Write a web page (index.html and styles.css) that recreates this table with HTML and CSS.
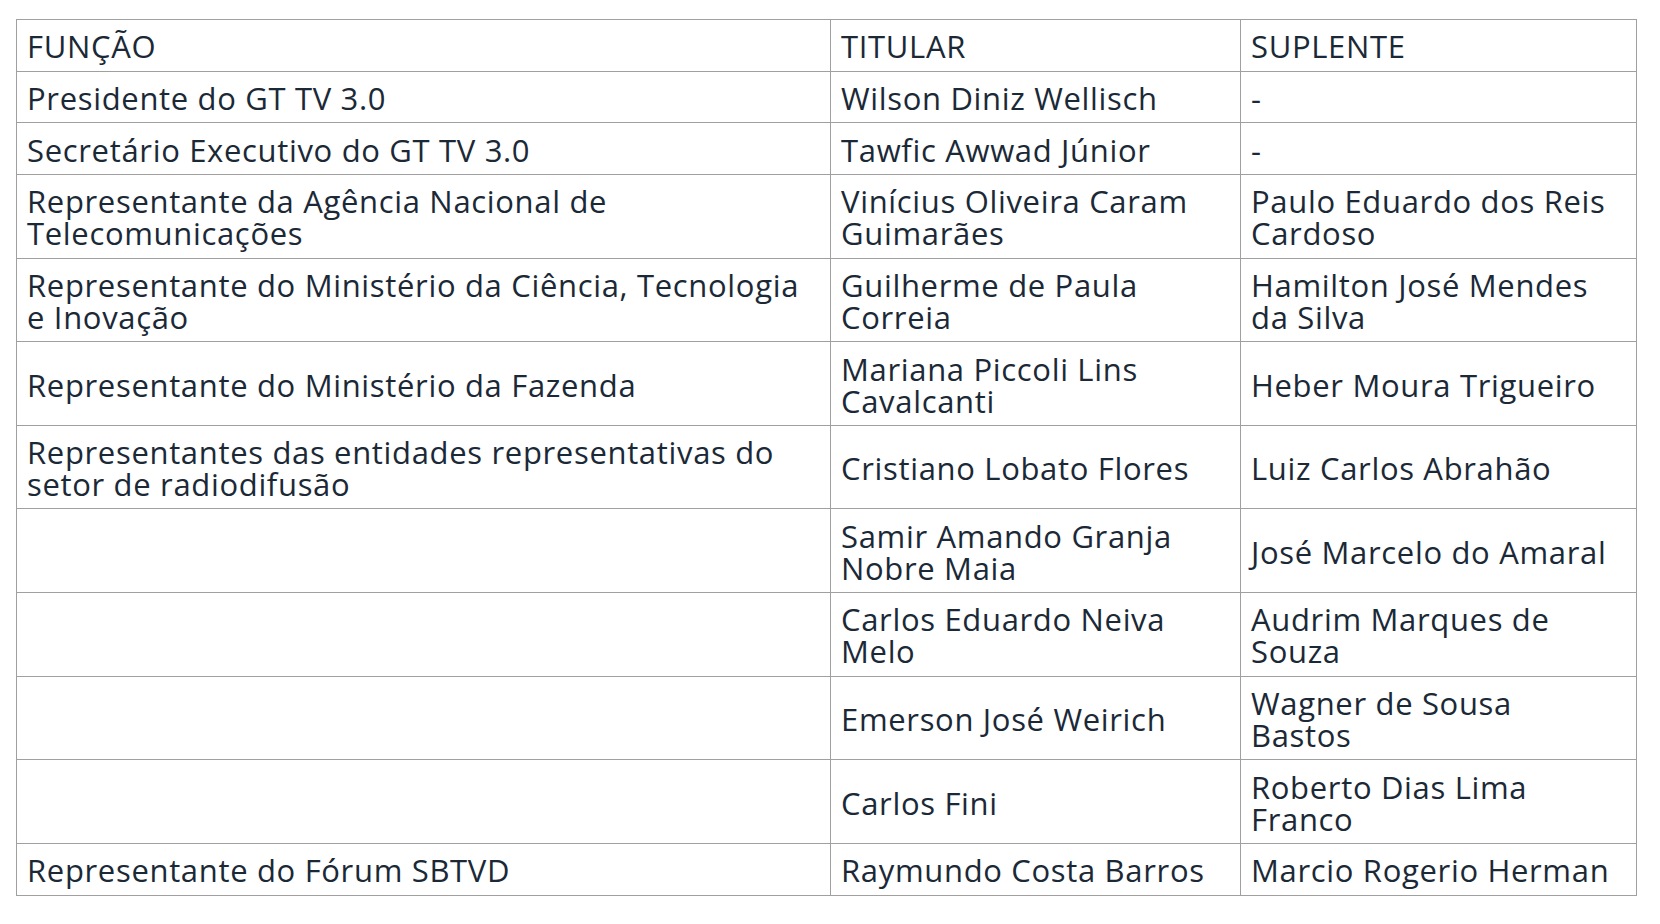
FILE: index.html
```html
<!DOCTYPE html>
<html lang="pt-BR">
<head>
<meta charset="utf-8">
<title>GT TV 3.0</title>
<link rel="stylesheet" href="styles.css">
</head>
<body>
<div class="wrap">
<table class="members">
  <colgroup>
    <col class="c-func">
    <col class="c-tit">
    <col class="c-sup">
  </colgroup>
  <tbody>
    <tr><td>FUNÇÃO</td><td>TITULAR</td><td>SUPLENTE</td></tr>
    <tr><td>Presidente do GT TV 3.0</td><td>Wilson Diniz Wellisch</td><td>-</td></tr>
    <tr><td>Secretário Executivo do GT TV 3.0</td><td>Tawfic Awwad Júnior</td><td>-</td></tr>
    <tr><td>Representante da Agência Nacional de<br>Telecomunicações</td><td>Vinícius Oliveira Caram<br>Guimarães</td><td>Paulo Eduardo dos Reis<br>Cardoso</td></tr>
    <tr><td>Representante do Ministério da Ciência, Tecnologia<br>e Inovação</td><td>Guilherme de Paula<br>Correia</td><td>Hamilton José Mendes<br>da Silva</td></tr>
    <tr><td>Representante do Ministério da Fazenda</td><td>Mariana Piccoli Lins<br>Cavalcanti</td><td>Heber Moura Trigueiro</td></tr>
    <tr><td>Representantes das entidades representativas do<br>setor de radiodifusão</td><td>Cristiano Lobato Flores</td><td>Luiz Carlos Abrahão</td></tr>
    <tr><td></td><td>Samir Amando Granja<br>Nobre Maia</td><td>José Marcelo do Amaral</td></tr>
    <tr><td></td><td>Carlos Eduardo Neiva<br>Melo</td><td>Audrim Marques de<br>Souza</td></tr>
    <tr><td></td><td>Emerson José Weirich</td><td>Wagner de Sousa<br>Bastos</td></tr>
    <tr><td></td><td>Carlos Fini</td><td>Roberto Dias Lima<br>Franco</td></tr>
    <tr><td>Representante do Fórum SBTVD</td><td>Raymundo Costa Barros</td><td>Marcio Rogerio Herman</td></tr>
  </tbody>
</table>
</div>
</body>
</html>
```
FILE: styles.css
```css
html, body {
  margin: 0;
  padding: 0;
  background: #ffffff;
}
.wrap {
  padding: 19px 0 0 16px;
}
.members {
  border-collapse: collapse;
  table-layout: fixed;
  width: 1620px;
  font-family: "Open Sans", Lato, sans-serif;
  font-size: 31px;
  font-weight: 400;
  line-height: 31.9px;
  letter-spacing: 0.67px;
  color: #1b2937;
}
.c-func { width: 814px; }
.c-tit { width: 410px; }
.c-sup { width: 396px; }
.members td {
  border: 1px solid #a0a0a0;
  padding: 11.4px 10px 7.4px;
  vertical-align: middle;
  text-align: left;
  white-space: nowrap;
}
```
